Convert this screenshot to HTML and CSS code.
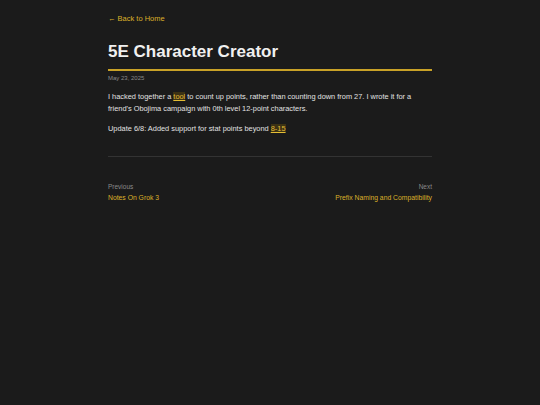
FILE: index.html
```html
<!DOCTYPE html>
<html>
<head>
<meta charset="utf-8">
<link rel="stylesheet" href="styles.css">
</head>
<body>
<main class="page">
  <a class="back" href="#">← Back to Home</a>
  <h1 class="title">5E Character Creator</h1>
  <div class="date">May 23, 2025</div>
  <p class="para">I hacked together a <a class="hl" href="#">tool</a> to count up points, rather than counting down from 27. I wrote it for a friend's Obojima campaign with 0th level 12-point characters.</p>
  <p class="para">Update 6/8: Added support for stat points beyond <a class="hl" href="#">8-15</a></p>
  <hr class="sep">
  <nav class="pager">
    <div class="prev">
      <div class="label">Previous</div>
      <a class="navlink" href="#">Notes On Grok 3</a>
    </div>
    <div class="next">
      <div class="label">Next</div>
      <a class="navlink" href="#">Prefix Naming and Compatibility</a>
    </div>
  </nav>
</main>
</body>
</html>
```
FILE: styles.css
```css
html, body {
  margin: 0;
  padding: 0;
  background: #1b1b1b;
}
body {
  font-family: "Liberation Sans", Arial, sans-serif;
  color: #e2e2e2;
}
.page {
  width: 324px;
  margin: 0 auto;
  padding-top: 14px;
}
.back {
  display: block;
  color: #dcb02a;
  font-size: 7.5px;
  text-decoration: none;
  line-height: 10px;
}
.title {
  margin: 17px 0 0 0;
  font-size: 17px;
  font-weight: bold;
  line-height: 22px;
  color: #f0f0f0;
  padding-bottom: 6px;
  border-bottom: 2px solid #c9a227;
}
.date {
  margin-top: 2px;
  font-size: 6px;
  color: #8a8a8a;
  line-height: 10px;
}
.para {
  margin: 8px 0 0 0;
  font-size: 7.4px;
  line-height: 12px;
  color: #e2e2e2;
}
.hl {
  color: #e4bd34;
  background: #3c3214;
  text-decoration: underline;
}
.sep {
  border: 0;
  border-top: 1px solid #333;
  margin: 21px 0 0 0;
}
.pager {
  display: flex;
  justify-content: space-between;
  margin-top: 25px;
}
.next { text-align: right; }
.label {
  font-size: 6.5px;
  color: #8a8a8a;
  line-height: 10px;
}
.navlink {
  display: block;
  font-size: 6.8px;
  color: #dcb02a;
  text-decoration: none;
  line-height: 12px;
}
```
